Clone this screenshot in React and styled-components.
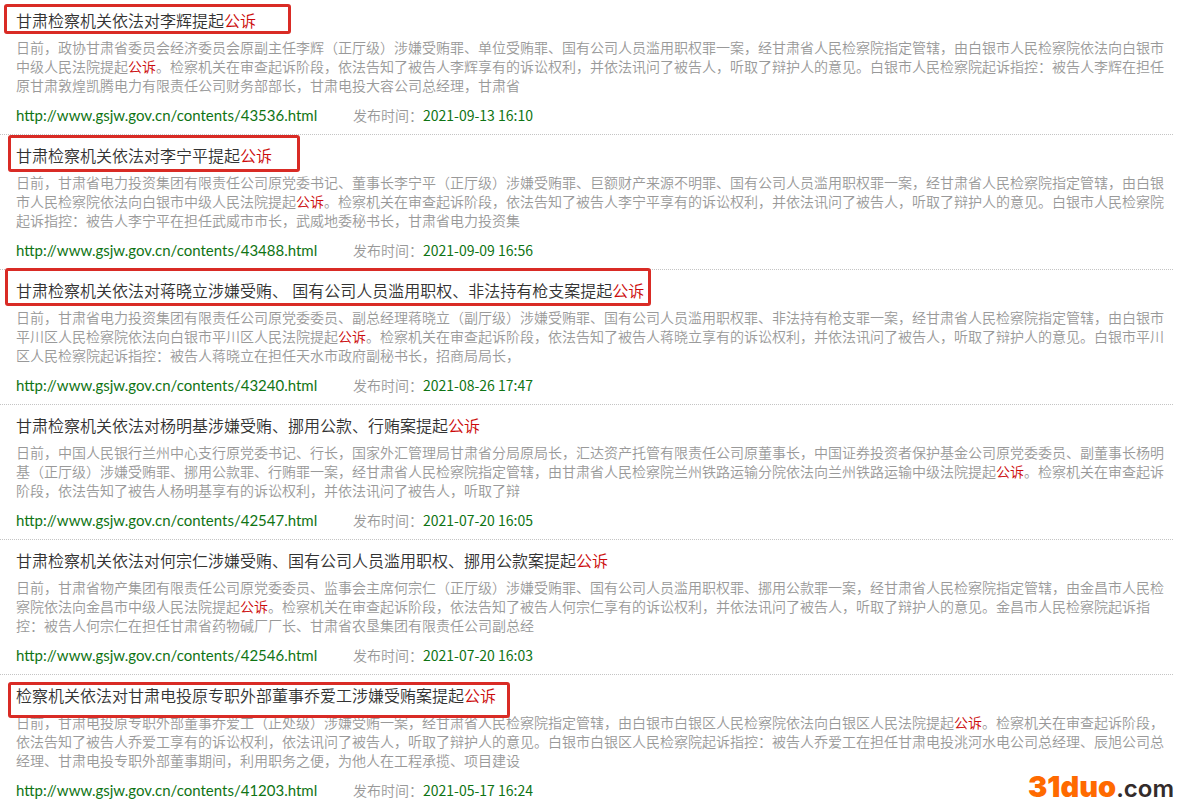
import styled, { createGlobalStyle } from "styled-components";

const COLORS = {
  title: "#333",
  text: "#999",
  red: "#cc0a0a",
  green: "#0f7414",
  line: "#c4c4c4",
  frame: "#d92b25",
  orange: "#ff6a00",
  dark: "#332c2b",
};

const GlobalStyle = createGlobalStyle`
  body {
    margin: 0;
    background: #fff;
    font-family: "Open Sans", "Noto Sans CJK SC", sans-serif;
    text-spacing-trim: space-all;
  }
`;

const Page = styled.main`
  position: relative;
`;

const List = styled.ul`
  list-style: none;
  margin: 0 19px 0 0;
  padding: 0;
`;

const Item = styled.li`
  position: relative;
  padding: 8px 0 8px 16px;
  border-bottom: 1px dotted ${COLORS.line};
  &:last-child {
    border-bottom: none;
  }
`;

const Title = styled.h3`
  margin: 0 0 4px;
  font-size: 16px;
  font-weight: 350;
  line-height: 26px;
  a {
    color: ${COLORS.title};
    text-decoration: none;
  }
`;

const Key = styled.em`
  font-style: normal;
  color: ${COLORS.red};
`;

const Summary = styled.p`
  margin: 0 0 9px;
  font-size: 14px;
  font-weight: 350;
  line-height: 19px;
  color: ${COLORS.text};
`;

const Meta = styled.div`
  display: flex;
  align-items: center;
  gap: 34px;
  line-height: 22px;
  font-size: 14px;
  color: ${COLORS.text};
`;

const Source = styled.a`
  min-width: 303px;
  font-family: Lato, sans-serif;
  font-size: 15px;
  color: ${COLORS.green};
  text-decoration: none;
`;

const Published = styled.span`
  font-family: "Noto Sans CJK SC", sans-serif;
  font-weight: 350;
  time {
    font-weight: 400;
    color: ${COLORS.green};
  }
`;

// red frame that lies over a result's title
const Frame = styled.span`
  position: absolute;
  box-sizing: border-box;
  top: ${(props) => props.$top}px;
  left: ${(props) => props.$left}px;
  width: ${(props) => props.$width}px;
  height: ${(props) => props.$height}px;
  border: 3px solid ${COLORS.frame};
  border-radius: 3px;
  pointer-events: none;
`;

const Watermark = styled.div`
  position: absolute;
  right: 18px;
  bottom: 4px;
  display: flex;
  align-items: baseline;
  font-family: Inter, sans-serif;
  line-height: 32px;
  color: ${COLORS.dark};
  font-size: 24px;
  font-weight: 600;
  strong {
    font-size: 29px;
    font-weight: 900;
    color: ${COLORS.orange};
  }
`;

const results = [
  {
    id: 43536,
    title: "甘肃检察机关依法对李辉提起公诉",
    summary:
      "日前，政协甘肃省委员会经济委员会原副主任李辉（正厅级）涉嫌受贿罪、单位受贿罪、国有公司人员滥用职权罪一案，经甘肃省人民检察院指定管辖，由白银市人民检察院依法向白银市中级人民法院提起公诉。检察机关在审查起诉阶段，依法告知了被告人李辉享有的诉讼权利，并依法讯问了被告人，听取了辩护人的意见。白银市人民检察院起诉指控：被告人李辉在担任原甘肃敦煌凯腾电力有限责任公司财务部部长，甘肃电投大容公司总经理，甘肃省",
    date: "2021-09-13 16:10",
    frame: { top: 4, left: 4, width: 287, height: 30 },
  },
  {
    id: 43488,
    title: "甘肃检察机关依法对李宁平提起公诉",
    summary:
      "日前，甘肃省电力投资集团有限责任公司原党委书记、董事长李宁平（正厅级）涉嫌受贿罪、巨额财产来源不明罪、国有公司人员滥用职权罪一案，经甘肃省人民检察院指定管辖，由白银市人民检察院依法向白银市中级人民法院提起公诉。检察机关在审查起诉阶段，依法告知了被告人李宁平享有的诉讼权利，并依法讯问了被告人，听取了辩护人的意见。白银市人民检察院起诉指控：被告人李宁平在担任武威市市长，武威地委秘书长，甘肃省电力投资集",
    date: "2021-09-09 16:56",
    frame: { top: 0, left: 8, width: 292, height: 37 },
  },
  {
    id: 43240,
    title: "甘肃检察机关依法对蒋晓立涉嫌受贿、 国有公司人员滥用职权、非法持有枪支案提起公诉",
    summary:
      "日前，甘肃省电力投资集团有限责任公司原党委委员、副总经理蒋晓立（副厅级）涉嫌受贿罪、国有公司人员滥用职权罪、非法持有枪支罪一案，经甘肃省人民检察院指定管辖，由白银市平川区人民检察院依法向白银市平川区人民法院提起公诉。检察机关在审查起诉阶段，依法告知了被告人蒋晓立享有的诉讼权利，并依法讯问了被告人，听取了辩护人的意见。白银市平川区人民检察院起诉指控：被告人蒋晓立在担任天水市政府副秘书长，招商局局长，",
    date: "2021-08-26 17:47",
    frame: { top: -2, left: 5, width: 646, height: 38 },
  },
  {
    id: 42547,
    title: "甘肃检察机关依法对杨明基涉嫌受贿、挪用公款、行贿案提起公诉",
    summary:
      "日前，中国人民银行兰州中心支行原党委书记、行长，国家外汇管理局甘肃省分局原局长，汇达资产托管有限责任公司原董事长，中国证券投资者保护基金公司原党委委员、副董事长杨明基（正厅级）涉嫌受贿罪、挪用公款罪、行贿罪一案，经甘肃省人民检察院指定管辖，由甘肃省人民检察院兰州铁路运输分院依法向兰州铁路运输中级法院提起公诉。检察机关在审查起诉阶段，依法告知了被告人杨明基享有的诉讼权利，并依法讯问了被告人，听取了辩",
    date: "2021-07-20 16:05",
  },
  {
    id: 42546,
    title: "甘肃检察机关依法对何宗仁涉嫌受贿、国有公司人员滥用职权、挪用公款案提起公诉",
    summary:
      "日前，甘肃省物产集团有限责任公司原党委委员、监事会主席何宗仁（正厅级）涉嫌受贿罪、国有公司人员滥用职权罪、挪用公款罪一案，经甘肃省人民检察院指定管辖，由金昌市人民检察院依法向金昌市中级人民法院提起公诉。检察机关在审查起诉阶段，依法告知了被告人何宗仁享有的诉讼权利，并依法讯问了被告人，听取了辩护人的意见。金昌市人民检察院起诉指控：被告人何宗仁在担任甘肃省药物碱厂厂长、甘肃省农垦集团有限责任公司副总经",
    date: "2021-07-20 16:03",
  },
  {
    id: 41203,
    title: "检察机关依法对甘肃电投原专职外部董事乔爱工涉嫌受贿案提起公诉",
    summary:
      "日前，甘肃电投原专职外部董事乔爱工（正处级）涉嫌受贿一案，经甘肃省人民检察院指定管辖，由白银市白银区人民检察院依法向白银区人民法院提起公诉。检察机关在审查起诉阶段，依法告知了被告人乔爱工享有的诉讼权利，依法讯问了被告人，听取了辩护人的意见。白银市白银区人民检察院起诉指控：被告人乔爱工在担任甘肃电投洮河水电公司总经理、辰旭公司总经理、甘肃电投专职外部董事期间，利用职务之便，为他人在工程承揽、项目建设",
    date: "2021-05-17 16:24",
    frame: { top: 7, left: 8, width: 502, height: 36 },
  },
];

const highlight = (text) =>
  text
    .split(/(公诉)/)
    .map((part, index) => (part === "公诉" ? <Key key={index}>{part}</Key> : part));

const Result = ({ id, title, summary, date, frame }) => {
  const url = `http://www.gsjw.gov.cn/contents/${id}.html`;
  return (
    <Item>
      <Title>
        <a href={url}>{highlight(title)}</a>
      </Title>
      <Summary>{highlight(summary)}</Summary>
      <Meta>
        <Source href={url}>{url}</Source>
        <Published>
          发布时间：<time>{date}</time>
        </Published>
      </Meta>
      {frame && (
        <Frame
          $top={frame.top}
          $left={frame.left}
          $width={frame.width}
          $height={frame.height}
        />
      )}
    </Item>
  );
};

const App = () => (
  <Page>
    <GlobalStyle />
    <List>
      {results.map((result) => (
        <Result key={result.id} {...result} />
      ))}
    </List>
    <Watermark>
      <strong>31duo</strong>.com
    </Watermark>
  </Page>
);

export default App;
